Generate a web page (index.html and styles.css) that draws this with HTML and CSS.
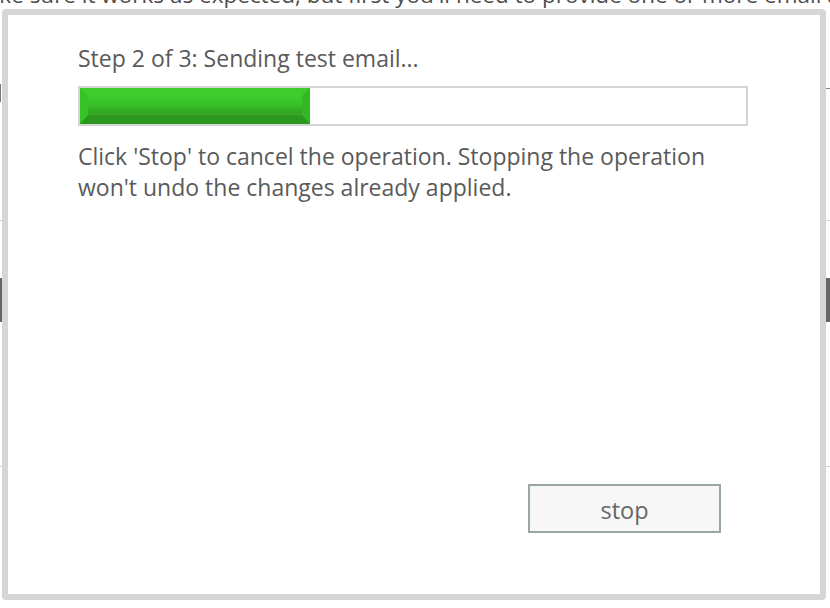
FILE: index.html
```html
<!DOCTYPE html>
<html>
<head>
<meta charset="utf-8">
<link rel="stylesheet" href="styles.css">
</head>
<body>
<div class="page">
  <p class="bg-text">make sure it works as expected, but first you'll need to provide one or more email addresses</p>
  <div class="bg-row bg-row-field"><span class="mark-left"></span><span class="mark-right"></span></div>
  <div class="bg-rule bg-rule-1"></div>
  <div class="bg-bar"></div>
  <div class="bg-rule bg-rule-2"></div>
</div>

<div class="dialog" role="dialog">
  <p class="step">Step 2 of 3: Sending test email...</p>
  <div class="progress">
    <div class="progress-fill" style="width:230px"></div>
  </div>
  <p class="desc">Click 'Stop' to cancel the operation. Stopping the operation won't undo the changes already applied.</p>
  <div class="footer">
    <button class="btn">stop</button>
  </div>
</div>
</body>
</html>
```
FILE: styles.css
```css
html, body {
  margin: 0;
  padding: 0;
  background: #ffffff;
}
body {
  width: 830px;
  height: 608px;
  overflow: hidden;
  font-family: "Open Sans", "Noto Sans", sans-serif;
  color: #5a5a5a;
}
.page {
  display: flex;
  flex-direction: column;
}
.bg-text {
  margin: -20px 0 0 -34px;
  font-size: 22.5px;
  line-height: 30px;
  white-space: nowrap;
  color: #4d4d4d;
}
.bg-row-field {
  margin-top: 74px;
  height: 18px;
  display: flex;
  justify-content: space-between;
}
.mark-left {
  width: 1px;
  background: #777;
}
.mark-right {
  width: 4px;
  margin-top: 4px;
  border-left: 1px solid #888;
  border-top: 1px solid #888;
}
.bg-rule {
  height: 1px;
  background: #ccd6d6;
}
.bg-rule-1 {
  margin-top: 118px;
}
.bg-bar {
  margin-top: 57px;
  height: 44px;
  background: #666;
}
.bg-rule-2 {
  margin-top: 144px;
}

.dialog {
  position: absolute;
  left: 2px;
  top: 9px;
  width: 742px;
  height: 551px;
  border: 6px solid #d6d6d6;
  border-radius: 4px;
  background: #fff;
  display: flex;
  flex-direction: column;
  padding: 28px 0 0 70px;
  box-sizing: content-box;
}
.step {
  margin: 0;
  font-size: 23px;
  line-height: 30px;
}
.progress {
  margin-top: 13px;
  width: 666px;
  height: 36px;
  border: 2px solid #d4d4d4;
  background: #fff;
  display: flex;
}
.progress-fill {
  box-sizing: border-box;
  height: 36px;
  border-style: solid;
  border-width: 8px 8px 9px 8px;
  border-color: #3ccd2c #33b725 #2a981e #37c228;
  background: linear-gradient(#3ccd2c 0%, #38c229 40%, #2c9f20 100%);
  box-shadow: inset 0 -1px 0 #4aa62c;
}
.desc {
  margin: 15px 0 0 0;
  width: 660px;
  font-size: 23px;
  line-height: 31px;
}
.footer {
  margin-top: auto;
  display: flex;
  justify-content: flex-end;
  padding: 0 99px 61px 0;
}
.btn {
  width: 193px;
  height: 49px;
  border: 2px solid #9aa5a5;
  background: #f7f7f7;
  font-family: "Open Sans", "Noto Sans", sans-serif;
  font-size: 23.5px;
  color: #666;
  padding: 2px 0 0 0;
}
```
